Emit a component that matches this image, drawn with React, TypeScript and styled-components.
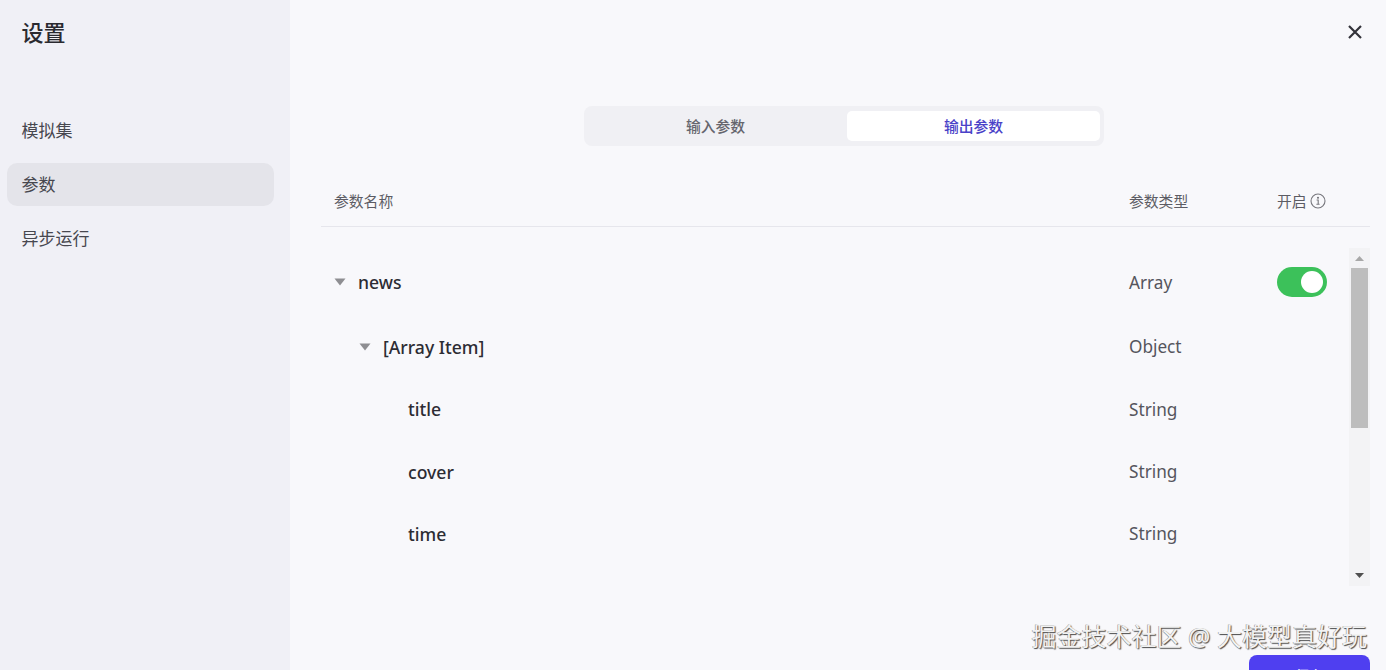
import React from 'react';
import styled, { createGlobalStyle } from 'styled-components';

const GlobalStyle = createGlobalStyle`
  html, body {
    margin: 0;
    padding: 0;
    height: 100%;
    overflow: hidden;
    background: #f8f8fb;
    font-family: 'Noto Sans', 'Noto Sans CJK SC', sans-serif;
  }
`;

const Page = styled.div`
  position: relative;
  display: flex;
  height: 670px;
  overflow: hidden;
`;

const Sidebar = styled.aside`
  width: 290px;
  flex-shrink: 0;
  box-sizing: border-box;
  padding: 17px 16px 0 7px;
  background: #f0f0f6;
`;

const Title = styled.h1`
  margin: 0 0 61.5px 14.5px;
  font-size: 22px;
  line-height: 30px;
  font-weight: 500;
  color: #2a2a30;
`;

const Menu = styled.nav`
  display: flex;
  flex-direction: column;
  gap: 11px;
`;

const MenuItem = styled.div<{ $active?: boolean }>`
  height: 43px;
  line-height: 44px;
  padding-left: 14.5px;
  border-radius: 10px;
  font-size: 17px;
  color: #47474f;
  background: ${props => (props.$active ? '#e4e4ea' : 'transparent')};
`;

const Main = styled.main`
  flex: 1;
  min-width: 0;
  box-sizing: border-box;
  padding: 0 16px 0 31px;
  display: flex;
  flex-direction: column;
`;

const TopBar = styled.div`
  height: 106px;
  flex-shrink: 0;
  display: flex;
  justify-content: flex-end;
  align-items: flex-start;
  padding-top: 23px;
  box-sizing: border-box;
`;

const CloseButton = styled.button`
  width: 18px;
  height: 18px;
  padding: 0;
  border: 0;
  background: none;
  color: #33333a;
  display: flex;
  margin-right: 6px;
`;

const Tabs = styled.div`
  align-self: flex-start;
  margin-left: 263px;
  width: 520px;
  height: 40px;
  box-sizing: border-box;
  padding: 5px 4px 5px 0;
  display: grid;
  grid-template-columns: 263px 253px;
  border-radius: 8px;
  background: #f0f0f4;
`;

const Tab = styled.div<{ $active?: boolean }>`
  border-radius: 5px;
  text-align: center;
  line-height: 30px;
  font-size: 14.8px;
  font-weight: 500;
  color: ${props => (props.$active ? '#4a42c8' : '#66666e')};
  background: ${props => (props.$active ? '#ffffff' : 'transparent')};
`;

const TableHead = styled.div`
  height: 81px;
  flex-shrink: 0;
  margin-bottom: 21px;
  box-sizing: border-box;
  padding: 30px 0 0 13px;
  display: flex;
  align-items: center;
  border-bottom: 1px solid #e6e6ec;
`;

const NameHead = styled.div`
  flex: 1;
  font-size: 14.8px;
  line-height: 22px;
  color: #5c5c64;
`;

const TypeHead = styled(NameHead)`
  flex: 0 0 148px;
`;

const SwitchHead = styled(NameHead)`
  flex: 0 0 93px;
  display: flex;
  align-items: center;
  gap: 3px;
`;

const TableBody = styled.div`
  display: flex;
  height: 338px;
  flex-shrink: 0;
`;

const Rows = styled.div`
  flex: 1;
  min-width: 0;
  padding: 3px 22px 0 13px;
`;

const Row = styled.div<{ $first?: boolean }>`
  height: 62.3px;
  margin-bottom: ${props => (props.$first ? '2.5px' : '0')};
  display: flex;
  align-items: center;
`;

const NameCell = styled.div<{ $depth: number }>`
  flex: 1;
  display: flex;
  align-items: center;
  padding-left: ${props => props.$depth * 25}px;
  font-size: 17.6px;
  font-weight: 500;
  color: #2c2c33;
`;

const Caret = styled.svg`
  width: 12px;
  height: 8px;
  margin-right: 12px;
  color: #8e8e92;
`;

const CaretGap = styled.span`
  width: 24px;
`;

const TypeCell = styled.div`
  flex: 0 0 148px;
  font-size: 17.2px;
  color: #55555d;
`;

const SwitchCell = styled.div`
  flex: 0 0 50px;
`;

const Toggle = styled.div`
  width: 50px;
  height: 30px;
  box-sizing: border-box;
  padding: 4px;
  display: flex;
  justify-content: flex-end;
  border-radius: 15px;
  background: #3cc15a;
`;

const Knob = styled.span`
  width: 22px;
  height: 22px;
  border-radius: 50%;
  background: #fff;
`;

const Scrollbar = styled.div`
  width: 21px;
  flex-shrink: 0;
  display: flex;
  flex-direction: column;
  align-items: center;
  background: #f3f3f5;
`;

const ScrollArrow = styled.svg`
  width: 21px;
  height: 20px;
  flex-shrink: 0;
`;

const ScrollThumb = styled.div`
  width: 17px;
  height: 160px;
  background: #bdbdbd;
`;

const ScrollSpacer = styled.div`
  flex: 1;
`;

const Footer = styled.div`
  display: flex;
  justify-content: flex-end;
  margin-top: 69px;
  flex-shrink: 0;
`;

const SaveButton = styled.button`
  width: 121px;
  height: 40px;
  border: 0;
  border-radius: 8px;
  background: #4f3ff0;
  color: #fff;
  font-family: inherit;
  font-size: 15px;
  font-weight: 500;
`;

const Watermark = styled.div`
  position: absolute;
  right: 19px;
  top: 618px;
  font-size: 25px;
  line-height: 36px;
  color: #f2f2f2;
  white-space: nowrap;
  text-shadow: 1px 1px 1px #4a4a4a, -0.5px -0.5px 0.5px #8a8a8a;
`;

type Param = { name: string; type: string; depth: number; expandable?: boolean; toggle?: boolean };

const params: Param[] = [
  { name: 'news', type: 'Array', depth: 0, expandable: true, toggle: true },
  { name: '[Array Item]', type: 'Object', depth: 1, expandable: true },
  { name: 'title', type: 'String', depth: 2 },
  { name: 'cover', type: 'String', depth: 2 },
  { name: 'time', type: 'String', depth: 2 },
];

const menu = ['模拟集', '参数', '异步运行'];

function App() {
  return (
    <Page>
      <GlobalStyle />
      <Sidebar>
        <Title>设置</Title>
        <Menu>
          {menu.map(item => (
            <MenuItem key={item} $active={item === '参数'}>{item}</MenuItem>
          ))}
        </Menu>
      </Sidebar>
      <Main>
        <TopBar>
          <CloseButton>
            <svg width="18" height="18" viewBox="0 0 18 18" fill="none" stroke="currentColor" strokeWidth="2.2">
              <path d="M3 3l12 12M15 3L3 15" />
            </svg>
          </CloseButton>
        </TopBar>
        <Tabs>
          <Tab>输入参数</Tab>
          <Tab $active>输出参数</Tab>
        </Tabs>
        <TableHead>
          <NameHead>参数名称</NameHead>
          <TypeHead>参数类型</TypeHead>
          <SwitchHead>
            开启
            <svg width="16" height="16" viewBox="0 0 16 16" fill="none" stroke="#77777d" strokeWidth="1.1">
              <circle cx="8" cy="8" r="7" />
              <path d="M6.6 7h1.6v4.2M6.4 11.3h3.2" />
              <circle cx="8" cy="4.8" r="0.5" fill="#77777d" />
            </svg>
          </SwitchHead>
        </TableHead>
        <TableBody>
          <Rows>
            {params.map(p => (
              <Row key={p.name} $first={p.depth === 0}>
                <NameCell $depth={p.depth}>
                  {p.expandable ? (
                    <Caret viewBox="0 0 12 8">
                      <path d="M0.5 0.5h11L6 7.5z" fill="currentColor" />
                    </Caret>
                  ) : (
                    <CaretGap />
                  )}
                  {p.name}
                </NameCell>
                <TypeCell>{p.type}</TypeCell>
                <SwitchCell>
                  {p.toggle && (
                    <Toggle>
                      <Knob />
                    </Toggle>
                  )}
                </SwitchCell>
              </Row>
            ))}
          </Rows>
          <Scrollbar>
            <ScrollArrow viewBox="0 0 21 20">
              <path d="M6 13h9l-4.5-5z" fill="#a8a8a8" />
            </ScrollArrow>
            <ScrollThumb />
            <ScrollSpacer />
            <ScrollArrow viewBox="0 0 21 20">
              <path d="M6 7h9l-4.5 5z" fill="#505050" />
            </ScrollArrow>
          </Scrollbar>
        </TableBody>
        <Footer>
          <SaveButton>保存</SaveButton>
        </Footer>
      </Main>
      <Watermark>掘金技术社区 @ 大模型真好玩</Watermark>
    </Page>
  );
}

export default App;
